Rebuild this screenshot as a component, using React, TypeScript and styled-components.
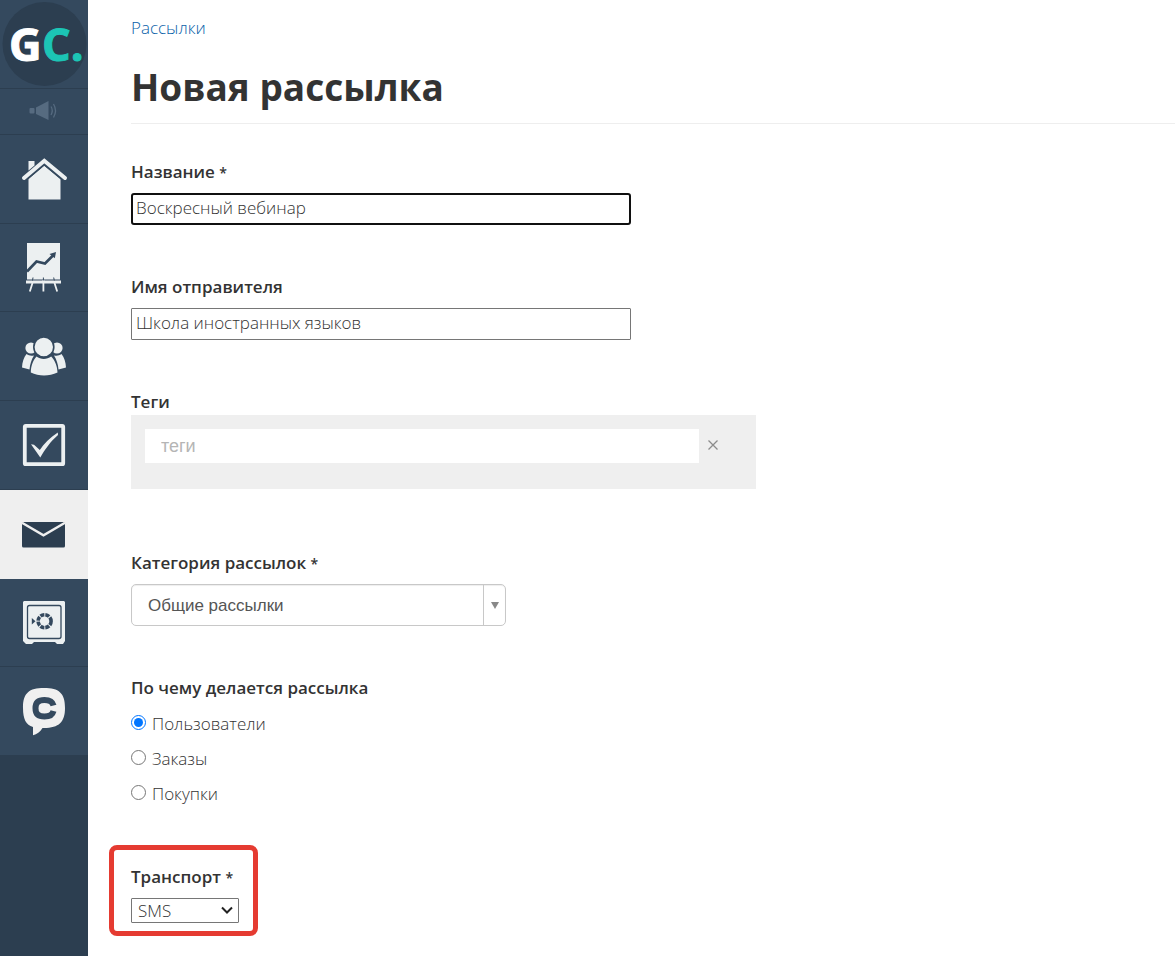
import React from "react";
import styled, { createGlobalStyle, css } from "styled-components";

const GlobalStyle = createGlobalStyle`
  *, *::before, *::after { box-sizing: border-box; }
  body {
    margin: 0;
    background: #fff;
    color: #333;
    font-family: "Open Sans", "Noto Sans", sans-serif;
    font-size: 17px;
    font-weight: 300;
    line-height: 20px;
  }
`;

const Page = styled.div`
  display: flex;
  min-height: 100vh;
`;

const Sidebar = styled.aside`
  flex: 0 0 88px;
  background: #2c3e50;
`;

const LogoLink = styled.a`
  display: block;
  height: 89px;
  background: #34495e;
  border-bottom: 1px solid #2c3e50;
`;

const NewsButton = styled.button`
  display: block;
  width: 100%;
  height: 46px;
  padding: 0;
  border: 0;
  border-bottom: 1px solid #2c3e50;
  background: #34495e;
`;

const Nav = styled.nav`
  display: grid;
  grid-template-rows: repeat(7, 1fr);
  height: 621px;
`;

const NavLink = styled.a<{ $active?: boolean }>`
  display: block;
  overflow: hidden;
  background: ${(p) => (p.$active ? "#efefef" : "#34495e")};
  border-bottom: 1px solid ${(p) => (p.$active ? "#efefef" : "#2c3e50")};
`;

const Glyph = styled.svg`
  display: block;
`;

const Main = styled.main`
  flex: 1;
  min-width: 0;
  padding: 18px 0 20px 43px;
`;

const Breadcrumb = styled.a`
  color: #0a62a9;
  text-decoration: none;
`;

const Title = styled.h1`
  margin: 24px 0 0;
  padding-bottom: 11px;
  border-bottom: 1px solid #eee;
  font-size: 37px;
  line-height: 50px;
  font-weight: 700;
`;

const Form = styled.form`
  padding-top: 38px;
`;

const labelText = css`
  display: block;
  padding: 0;
  margin: 0 0 11px;
  font-size: 17px;
  line-height: 20px;
  font-weight: 600;
`;

const Label = styled.label<{ $tight?: boolean }>`
  ${labelText}
  ${(p) => p.$tight && "margin-bottom: 3px;"}
`;

const Legend = styled.legend`
  ${labelText}
  margin-bottom: 16px;
`;

const Required = styled.span`
  font-size: 14px;
  line-height: 1;
`;

const Field = styled.div<{ $gap?: number }>`
  margin-bottom: ${(p) => p.$gap ?? 52}px;
`;

const TextInput = styled.input<{ $focused?: boolean }>`
  display: block;
  width: 500px;
  max-width: 100%;
  height: 32px;
  padding: 0 ${(p) => (p.$focused ? 3 : 4)}px 4px;
  border: ${(p) => (p.$focused ? "2px solid #101010" : "1px solid #767676")};
  border-radius: ${(p) => (p.$focused ? 3 : 1)}px;
  outline: none;
  background: #fff;
  color: #333;
  font: inherit;
`;

const TagPanel = styled.div`
  display: flex;
  align-items: flex-start;
  width: 625px;
  max-width: 100%;
  height: 74px;
  padding: 14px;
  background: #efefef;
`;

const TagInput = styled.input`
  width: 554px;
  min-width: 0;
  height: 34px;
  padding: 0 16px;
  border: 0;
  outline: none;
  background: #fff;
  font-family: "Liberation Sans", Arial, sans-serif;
  font-size: 18px;
  font-weight: 400;
  &::placeholder { color: #b5b5b5; opacity: 1; }
`;

const ClearButton = styled.button`
  width: 28px;
  height: 32px;
  padding: 0;
  border: 0;
  background: none;
`;

const Combo = styled.div`
  position: relative;
  width: 375px;
  max-width: 100%;
`;

const ComboSelect = styled.select`
  appearance: none;
  display: block;
  width: 100%;
  height: 42px;
  padding: 0 40px 0 16px;
  border: 1px solid #c8c8c8;
  border-radius: 5px;
  background: #fff;
  box-shadow: inset 0 1px 1px rgba(0, 0, 0, 0.07);
  color: #555;
  font-family: "Liberation Sans", Arial, sans-serif;
  font-size: 17px;
  font-weight: 400;
`;

const ComboArrow = styled.span`
  position: absolute;
  top: 1px;
  right: 1px;
  bottom: 1px;
  display: flex;
  align-items: center;
  justify-content: center;
  width: 22px;
  border-left: 1px solid #c8c8c8;
  pointer-events: none;
`;

const RadioGroup = styled.fieldset`
  min-width: 0;
  margin: 0 0 26px;
  padding: 0;
  border: 0;
`;

const RadioRow = styled.label`
  display: flex;
  align-items: center;
  gap: 6px;
  height: 20px;
  margin-bottom: 15px;
`;

const Radio = styled.input`
  width: 15px;
  height: 15px;
  margin: 0 0 4px;
  accent-color: #0075ff;
`;

const Highlight = styled.div`
  width: fit-content;
  margin-left: -22px;
  padding: 17px 14px 8px 17px;
  border: 5px solid #e53b31;
  border-radius: 8px;
`;

const TransportBox = styled.div`
  position: relative;
  width: 108px;
`;

const TransportSelect = styled.select`
  appearance: none;
  display: block;
  width: 100%;
  height: 25px;
  padding: 0 24px 0 6px;
  border: 1px solid #767676;
  border-radius: 1px;
  background: #fff;
  color: #333;
  font: inherit;
`;

const TransportArrow = styled.svg`
  position: absolute;
  top: 8px;
  right: 6px;
  pointer-events: none;
`;

const light = "#ecf0f1";
const dark = "#34495e";

const HomeIcon = () => (
  <>
    <path d="M28.500 64.500V44L44 30.500L60.500 44V64.500Z" fill={light} />
    <path d="M24 43L44.300 25.800L65 43" fill="none" stroke={dark} strokeWidth="7.500" />
    <path d="M28.500 26H34.500V30.500L28.500 35.500Z" fill={light} />
    <path d="M24 43L44.300 25.800L65 43" fill="none" stroke={light} strokeWidth="4" strokeLinecap="round" />
  </>
);

const ChartIcon = () => (
  <g transform="translate(0 -1)">
    <path d="M27 20H60V56.500H27Z" fill={light} />
    <path d="M26 57.500H61V60.500H26Z" fill={light} />
    <path d="M32.500 60L29.800 68.500M43.400 57V68.500M54.500 60L57.200 68.500" stroke={light} strokeWidth="1.800" />
    <path d="M33 54.500L32.500 57.500M43.400 54.500V57.500M53.700 54.500L54.300 57.500" stroke={dark} strokeWidth="1" />
    <path d="M27 48.500L36.500 38.500L45 40.500L53.500 32" fill="none" stroke={dark} strokeWidth="2.600" />
    <path d="M49.500 31L56 29L54.800 35.300Z" fill={dark} />
  </g>
);

const UsersIcon = () => (
  <g fill={light}>
    <circle cx="31" cy="36" r="5.600" />
    <circle cx="57" cy="36" r="5.600" />
    <path d="M26.500 42C29 44 31.500 43.800 34 43.500C31.500 47.500 30 52 29.500 57.500L22 55.500C22.300 50 23.800 45.500 26.500 42Z" />
    <path d="M61.500 42C59 44 56.500 43.800 54 43.500C56.500 47.500 58 52 58.500 57.500L66 55.500C65.700 50 64.200 45.500 61.500 42Z" />
    <circle cx="43.800" cy="35" r="10" stroke={dark} strokeWidth="1.600" />
    <path d="M36.500 44.500C40.500 47.700 47 47.700 51.200 44.500C55.500 49 57.200 54.500 57.500 60.500C49 64.500 39 64.500 30.800 60.500C31 54.500 32.500 49 36.500 44.500Z" />
  </g>
);

const TaskIcon = () => (
  <>
    <rect x="24.800" y="24.800" width="38.400" height="38.400" rx="1" fill="none" stroke={light} strokeWidth="3.800" />
    <path d="M31 43.300L34 43.800L39.800 49C44 42.500 50 36.500 57.800 31.500L58 34C50 41 45 48.500 40.300 56.500Z" fill={light} />
  </>
);

const MailIcon = () => (
  <>
    <rect x="22" y="32" width="43" height="25.500" rx="1.500" fill="#2c3e50" />
    <path d="M22 32.800L43.500 45.300L65 32.800" fill="none" stroke="#efefef" strokeWidth="2.400" />
  </>
);

const SafeIcon = () => (
  <g transform="translate(0 -1)">
    <path d="M24 23H64L65 24V63L63 66H57L55 64H34L32 66H26L23 63V24Z" fill={light} />
    <rect x="27.500" y="27.500" width="33.500" height="33" rx="2" fill="none" stroke={dark} strokeWidth="1.300" />
    <circle cx="44.600" cy="43.200" r="6.500" fill="none" stroke={dark} strokeWidth="3.600" strokeDasharray="4.100 1" />
    <path d="M31.800 40L35.500 43.200L31.800 46.500Z" fill={dark} />
  </g>
);

const ChatIcon = () => (
  <>
    <path d="M44 21C59 21 65 26 65 41C65 55 59 61 44 61L42.500 61C40 65 37 67 33 68.300V60C26 58 23 52 23 41C23 26 29 21 44 21Z" fill="#f0f0f0" />
    <path d="M53.500 38.500C52.500 34.500 49.500 33 44.500 33C38.500 33 35.500 35.500 35.500 41.200C35.500 47 38.500 49.500 44.500 49.500C49.500 49.500 52.500 48 53.500 44" fill="none" stroke={dark} strokeWidth="6" />
  </>
);

const sections = [
  { name: "Главная", Icon: HomeIcon },
  { name: "Статистика", Icon: ChartIcon },
  { name: "Пользователи", Icon: UsersIcon },
  { name: "Задачи", Icon: TaskIcon },
  { name: "Рассылки", Icon: MailIcon, active: true },
  { name: "Продажи", Icon: SafeIcon },
  { name: "Чат", Icon: ChatIcon },
];

const sources = ["Пользователи", "Заказы", "Покупки"];

export default function App() {
  return (
    <Page>
      <GlobalStyle />
      <Sidebar>
        <LogoLink href="#" aria-label="GC">
          <Glyph width="88" height="88" viewBox="0 0 88 88">
            <circle cx="44.500" cy="44" r="42" fill="#2c3e50" />
            <g fontFamily="Open Sans" fontWeight="700" fontSize="45">
              <text x="9" y="61" fill="#fff" stroke="#fff" strokeWidth="1">G</text>
              <text x="42" y="61" fill="#1cc5b5" stroke="#1cc5b5" strokeWidth="1">C.</text>
            </g>
          </Glyph>
        </LogoLink>
        <NewsButton type="button" aria-label="Новости">
          <Glyph width="88" height="45" viewBox="0 0 88 45" fill="#566b80">
            <rect x="29.500" y="19" width="5" height="5.500" rx="1" />
            <path d="M36 18.500L48.500 12V31L36 25Z" />
            <path d="M51 17.500Q53.500 21.500 51 26M53.500 15Q57.500 21.500 53.500 28.500" fill="none" stroke="#566b80" strokeWidth="1.300" />
          </Glyph>
        </NewsButton>
        <Nav>
          {sections.map(({ name, Icon, active }) => (
            <NavLink key={name} href="#" aria-label={name} $active={active}>
              <Glyph width="88" height="88" viewBox="0 0 88 88">
                <Icon />
              </Glyph>
            </NavLink>
          ))}
        </Nav>
      </Sidebar>
      <Main>
        <Breadcrumb href="#">Рассылки</Breadcrumb>
        <Title>Новая рассылка</Title>
        <Form>
          <Field>
            <Label htmlFor="name">Название <Required>*</Required></Label>
            <TextInput id="name" $focused defaultValue="Воскресный вебинар" />
          </Field>
          <Field>
            <Label htmlFor="sender">Имя отправителя</Label>
            <TextInput id="sender" defaultValue="Школа иностранных языков" />
          </Field>
          <Field $gap={64}>
            <Label htmlFor="tags" $tight>Теги</Label>
            <TagPanel>
              <TagInput id="tags" placeholder="теги" />
              <ClearButton type="button" aria-label="Очистить">
                <svg width="10" height="10" viewBox="0 0 10 10">
                  <path d="M0.500 0.500L9.500 9.500M9.500 0.500L0.500 9.500" stroke="#8c8c8c" strokeWidth="1.300" />
                </svg>
              </ClearButton>
            </TagPanel>
          </Field>
          <Field>
            <Label htmlFor="category">Категория рассылок <Required>*</Required></Label>
            <Combo>
              <ComboSelect id="category">
                <option>Общие рассылки</option>
              </ComboSelect>
              <ComboArrow>
                <svg width="8" height="7" viewBox="0 0 8 7">
                  <path d="M0 0H8L4 7Z" fill="#888" />
                </svg>
              </ComboArrow>
            </Combo>
          </Field>
          <RadioGroup>
            <Legend>По чему делается рассылка</Legend>
            {sources.map((source, i) => (
              <RadioRow key={source}>
                <Radio type="radio" name="source" defaultChecked={i === 0} />
                {source}
              </RadioRow>
            ))}
          </RadioGroup>
          <Highlight>
            <Label htmlFor="transport">Транспорт <Required>*</Required></Label>
            <TransportBox>
              <TransportSelect id="transport">
                <option>SMS</option>
              </TransportSelect>
              <TransportArrow width="12" height="9" viewBox="0 0 12 9">
                <path d="M1 1.500L6 6.500L11 1.500" fill="none" stroke="#222" strokeWidth="2" />
              </TransportArrow>
            </TransportBox>
          </Highlight>
        </Form>
      </Main>
    </Page>
  );
}
